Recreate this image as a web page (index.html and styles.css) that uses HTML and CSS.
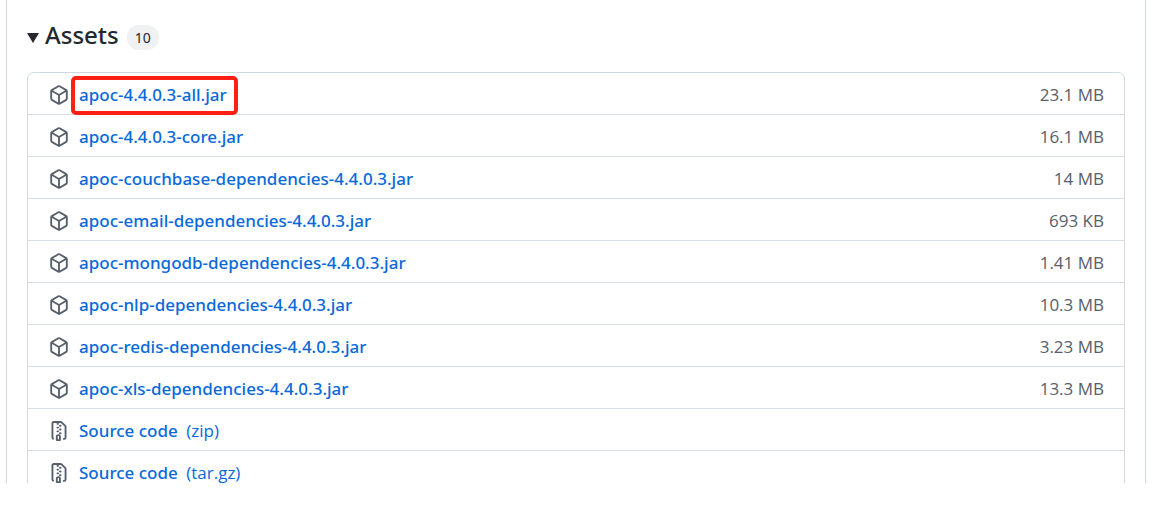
FILE: index.html
```html
<!DOCTYPE html>
<html lang="en">
  <head>
    <meta charset="UTF-8">
    <title>Assets</title>
    <link rel="stylesheet" href="styles.css">
  </head>
  <body>
    <!-- shared icons -->
    <svg class="sprite" aria-hidden="true">
      <symbol id="package" viewBox="0 0 16 16">
        <path fill-rule="evenodd" d="M8.878.392a1.75 1.75 0 0 0-1.756 0l-5.25 3.045A1.75 1.75 0 0 0 1 4.951v6.098c0 .624.332 1.2.872 1.514l5.25 3.045a1.75 1.75 0 0 0 1.756 0l5.25-3.045c.54-.313.872-.89.872-1.514V4.951c0-.624-.332-1.2-.872-1.514L8.878.392ZM7.875 1.69a.25.25 0 0 1 .25 0l4.63 2.685L8 7.133 3.245 4.375l4.63-2.685ZM2.5 5.677v5.372c0 .09.047.171.125.216l4.625 2.683V8.432L2.5 5.677Zm6.25 8.271 4.625-2.683a.25.25 0 0 0 .125-.216V5.677L8.75 8.432v5.516Z"/>
      </symbol>
      <symbol id="file-zip" viewBox="0 0 16 16">
        <path fill-rule="evenodd" d="M3.5 1.75v11.5c0 .09.048.173.126.217a.75.75 0 0 1-.752 1.298A1.748 1.748 0 0 1 2 13.25V1.75C2 .784 2.784 0 3.75 0h5.586c.464 0 .909.185 1.237.513l2.914 2.914c.329.328.513.773.513 1.237v8.586A1.75 1.75 0 0 1 12.25 15h-.5a.75.75 0 0 1 0-1.5h.5a.25.25 0 0 0 .25-.25V4.664a.25.25 0 0 0-.073-.177L9.513 1.573a.25.25 0 0 0-.177-.073H7.25a.75.75 0 0 1 0 1.5h-.5a.75.75 0 0 1 0-1.5h-3a.25.25 0 0 0-.25.25Z"/>
        <path d="M8.75 3h.5a.75.75 0 0 1 0 1.5h-.5a.75.75 0 0 1 0-1.5ZM6.75 4.5h.5a.75.75 0 0 1 0 1.5h-.5a.75.75 0 0 1 0-1.5ZM8.75 6h.5a.75.75 0 0 1 0 1.5h-.5a.75.75 0 0 1 0-1.5ZM6.75 7.5h.5a.75.75 0 0 1 0 1.5h-.5a.75.75 0 0 1 0-1.5ZM8.75 9h.5a.75.75 0 0 1 0 1.5h-.5a.75.75 0 0 1 0-1.5Z"/>
        <path fill-rule="evenodd" d="M7.25 10.5h.5c.966 0 1.75.784 1.75 1.75v3a.75.75 0 0 1-.75.75h-2.5a.75.75 0 0 1-.75-.75v-3c0-.966.784-1.75 1.75-1.75ZM7 12.25v2.25h1v-2.25a.25.25 0 0 0-.25-.25h-.5a.25.25 0 0 0-.25.25Z"/>
      </symbol>
    </svg>

    <div class="release">
      <details open>
        <summary>
          <h2>Assets</h2>
          <span class="counter">10</span>
        </summary>

        <ul class="assets">
          <li>
            <svg class="icon"><use href="#package"/></svg>
            <a class="marked" href="#">apoc-4.4.0.3-all.jar</a>
            <span class="size">23.1 MB</span>
          </li>
          <li>
            <svg class="icon"><use href="#package"/></svg>
            <a href="#">apoc-4.4.0.3-core.jar</a>
            <span class="size">16.1 MB</span>
          </li>
          <li>
            <svg class="icon"><use href="#package"/></svg>
            <a href="#">apoc-couchbase-dependencies-4.4.0.3.jar</a>
            <span class="size">14 MB</span>
          </li>
          <li>
            <svg class="icon"><use href="#package"/></svg>
            <a href="#">apoc-email-dependencies-4.4.0.3.jar</a>
            <span class="size">693 KB</span>
          </li>
          <li>
            <svg class="icon"><use href="#package"/></svg>
            <a href="#">apoc-mongodb-dependencies-4.4.0.3.jar</a>
            <span class="size">1.41 MB</span>
          </li>
          <li>
            <svg class="icon"><use href="#package"/></svg>
            <a href="#">apoc-nlp-dependencies-4.4.0.3.jar</a>
            <span class="size">10.3 MB</span>
          </li>
          <li>
            <svg class="icon"><use href="#package"/></svg>
            <a href="#">apoc-redis-dependencies-4.4.0.3.jar</a>
            <span class="size">3.23 MB</span>
          </li>
          <li>
            <svg class="icon"><use href="#package"/></svg>
            <a href="#">apoc-xls-dependencies-4.4.0.3.jar</a>
            <span class="size">13.3 MB</span>
          </li>
          <li>
            <svg class="icon"><use href="#file-zip"/></svg>
            <a href="#">Source code <span class="format">(zip)</span></a>
          </li>
          <li>
            <svg class="icon"><use href="#file-zip"/></svg>
            <a href="#">Source code <span class="format">(tar.gz)</span></a>
          </li>
        </ul>
      </details>
    </div>
  </body>
</html>
```

FILE: styles.css
```css
* {
  box-sizing: border-box;
}

body {
  margin: 0;
  background-color: #fff;
  color: #24292f;
  font-family: "Segoe UI", "Noto Sans", sans-serif;
  font-size: 17px;
  line-height: 24px;
}

.sprite {
  display: none;
}

.release {
  height: calc(100vh - 27px);
  margin: 0 14px 0 6px;
  padding: 19px 20px 0;
  border: solid #d0d7de;
  border-width: 0 1px;
  overflow: hidden;
}

summary {
  display: flex;
  align-items: center;
  height: 32px;
  cursor: pointer;
  list-style: none;
}

/* disclosure triangle */
summary::before {
  content: "";
  margin: 6px 6px 0 0;
  border: solid transparent;
  border-width: 10px 6px 0;
  border-top-color: #24292f;
}

h2 {
  margin: 0;
  font-size: 24px;
  font-weight: 500;
  line-height: 32px;
}

.counter {
  margin: 5px 0 0 8px;
  padding: 0 8px;
  border-radius: 12px;
  background-color: #eff1f3;
  font-size: 14px;
  line-height: 25px;
}

.assets {
  margin: 21px 0 0;
  padding: 0;
  border: 1px solid #d0d7de;
  border-radius: 7px;
  list-style: none;
}

.assets li {
  display: flex;
  align-items: center;
  height: 42px;
  padding: 2px 20px 0 21px;
}

.assets li + li {
  border-top: 1px solid #d8dee4;
}

.assets li:first-child {
  height: 41px;
}

.icon {
  flex: none;
  width: 20px;
  height: 20px;
  margin-right: 10px;
  fill: #57606a;
}

a {
  position: relative;
  color: #0969da;
  font-weight: 500;
  text-decoration: none;
}

.format {
  margin-left: 4px;
  font-family: "Segoe UI", "Open Sans", sans-serif;
  font-weight: 400;
}

.size {
  margin-left: auto;
  color: #57606a;
  font-family: "Segoe UI", "Open Sans", sans-serif;
}

/* red frame around the jar to download */
.marked::after {
  content: "";
  position: absolute;
  inset: -7px -11px -8px -8px;
  border: 4px solid #ff2015;
  border-radius: 5px;
}
```
